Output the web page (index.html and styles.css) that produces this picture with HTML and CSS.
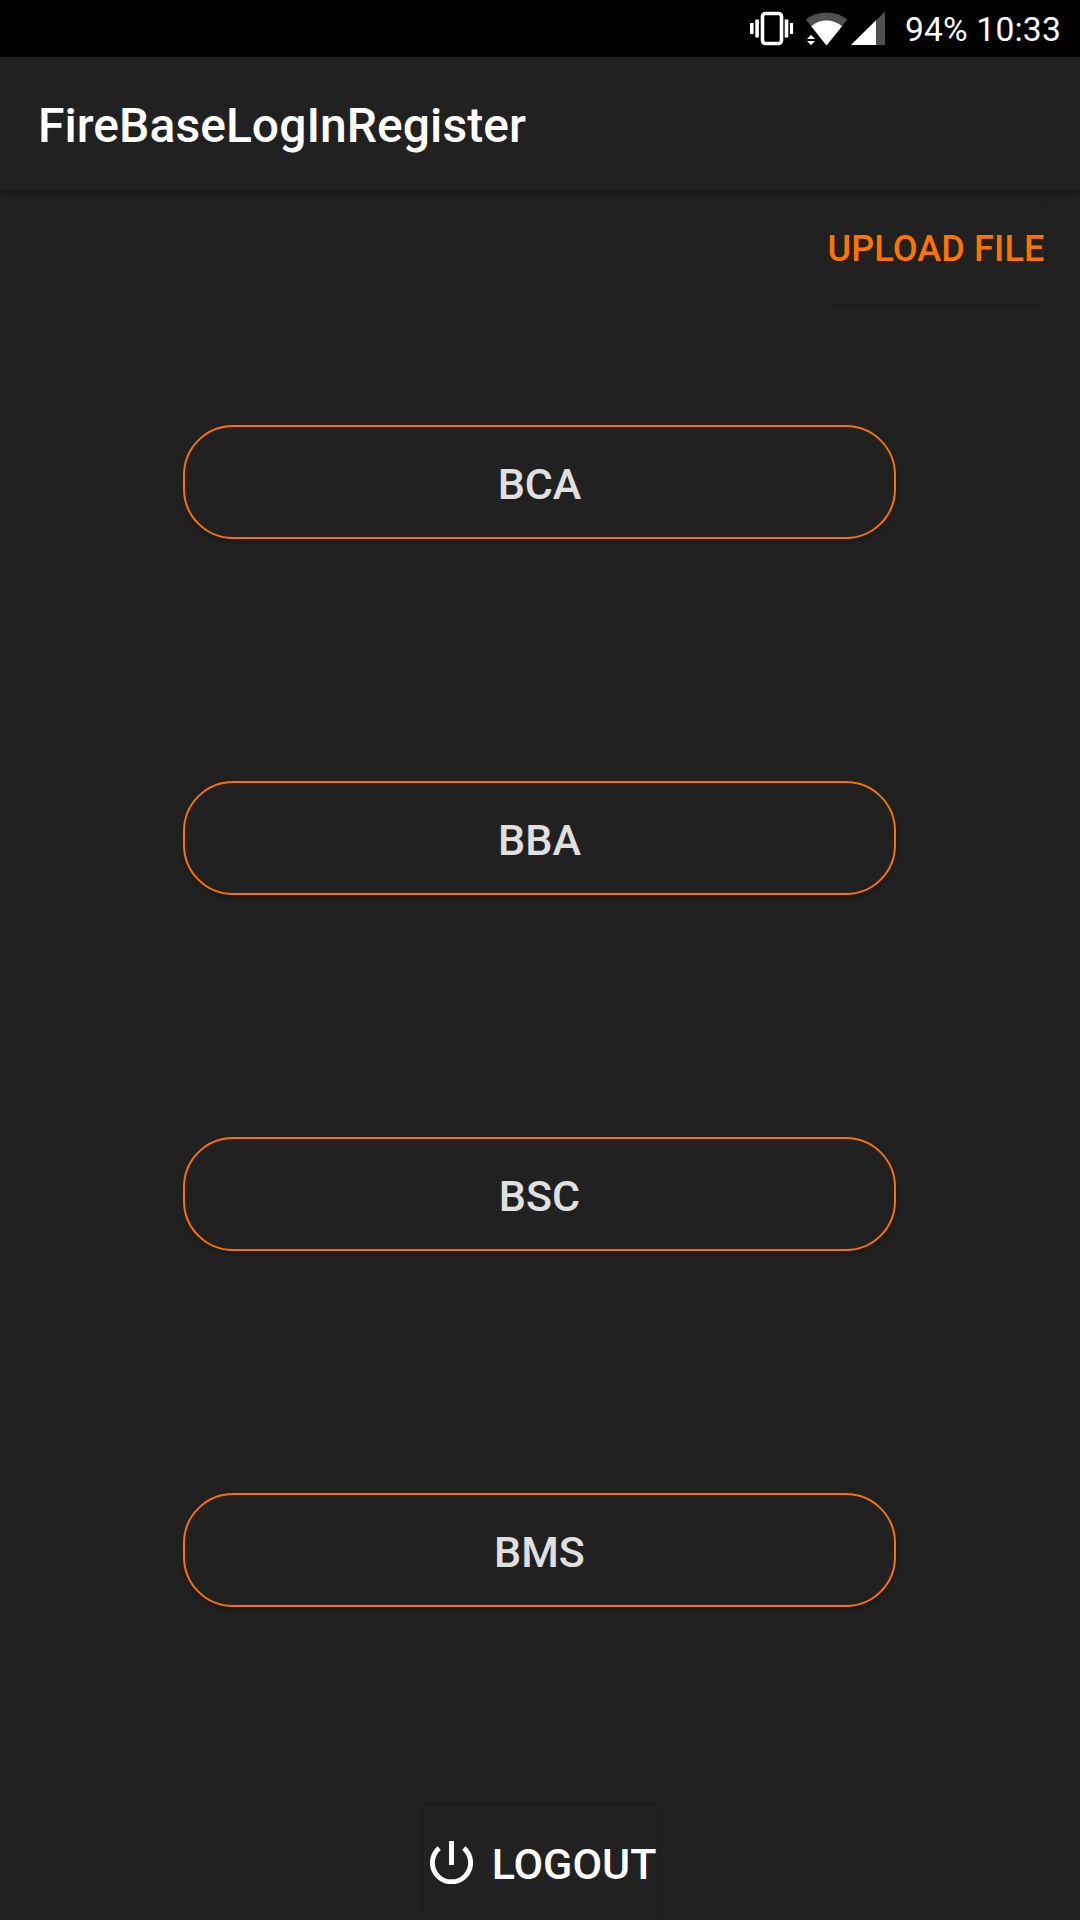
FILE: index.html
```html
<!DOCTYPE html>
<html lang="en">
<head>
<meta charset="utf-8">
<title>FireBaseLogInRegister</title>
<link rel="stylesheet" href="styles.css">
</head>
<body>
<div class="screen">
  <div class="status-bar">
    <svg class="status-icons" viewBox="0 0 140 57" aria-hidden="true">
      <rect x="12.5" y="13.5" width="19" height="30" rx="3" fill="none" stroke="#fff" stroke-width="3.6"/>
      <path fill="#fff" d="M0 23h3.6v11H0zM5.3 19.5h3.6v18H5.3zM34.7 19.5h3.6v18h-3.6zM39.9 23h3.2v11h-3.2z"/>
      <path fill="#505050" d="M55.7 19.6Q64.5 12.4 76.5 12.4T97.3 19.6L76.5 45.5z"/>
      <path fill="#fff" d="M61.3 26.3Q67.5 20.4 76.5 20.4T92 26.3L76.5 45.5z"/>
      <path fill="#fff" d="M57 39h8l-4-4.3zM57 41h8l-4 4.3z"/>
      <path fill="#505050" d="M135 11.5V45h-34z"/>
      <path fill="#fff" d="M126 20.3V45h-25z"/>
    </svg>
    <span class="status-text">94% 10:33</span>
  </div>
  <header class="app-bar"><h1 class="app-title">FireBaseLogInRegister</h1></header>
  <div class="toolbar"><button class="flat-button upload">UPLOAD FILE</button></div>
  <main class="courses">
    <button class="course">BCA</button>
    <button class="course">BBA</button>
    <button class="course">BSC</button>
    <button class="course">BMS</button>
  </main>
  <footer class="footer">
    <button class="flat-button logout">
      <svg class="power" viewBox="0 0 43 43" fill="none" stroke="#fff" stroke-width="4.9" aria-hidden="true">
        <path d="M21.5 0v24M9.2 7.1A19.1 19.1 0 1 0 33.8 7.1"/>
      </svg>
      <span>LOGOUT</span>
    </button>
  </footer>
</div>
</body>
</html>
```
FILE: styles.css
```css
* { box-sizing: border-box; }
body { margin: 0; background: #212121; font-family: Roboto, sans-serif; }
button { margin: 0; border: 0; font-family: inherit; font-weight: 500; background: #212121; }
.screen {
  display: flex;
  flex-direction: column;
  width: 1080px;
  height: 1920px;
  overflow: hidden;
  background: #212121;
}
.status-bar {
  display: flex;
  justify-content: flex-end;
  align-items: center;
  height: 57px;
  padding-right: 19px;
  background: #000;
  color: #fff;
}
.status-icons { width: 140px; height: 57px; margin-right: 15px; }
.status-text { padding-top: 3px; font-size: 33.6px; line-height: 40px; letter-spacing: .2px; white-space: nowrap; }
.app-bar {
  display: flex;
  align-items: center;
  height: 133px;
  padding: 4px 38px 0 38px;
  background: #212121;
  box-shadow: 0 3px 9px rgba(0, 0, 0, .3);
  z-index: 1;
}
.app-title { margin: 0; color: #fff; font-size: 48px; font-weight: 500; line-height: 56px; letter-spacing: .05px; }
.toolbar { display: flex; justify-content: flex-end; height: 114px; padding-right: 35px; }
.flat-button {
  display: flex;
  align-items: center;
  justify-content: center;
  height: 114px;
  padding: 3px 0 0;
  white-space: nowrap;
  box-shadow: 0 0 4px rgba(0, 0, 0, .2);
}
.upload { width: 219px; padding-left: 1px; color: #ff7300; font-size: 36px; letter-spacing: .15px; }
.courses {
  display: flex;
  flex-direction: column;
  align-items: center;
  gap: 242px;
  padding: 121px 1px 0 0;
}
.course {
  width: 713px;
  height: 114px;
  padding: 3px 0 0;
  border: 2px solid #f77208;
  border-radius: 50px;
  color: #e0e0e0;
  font-size: 43px;
  box-shadow: 0 3px 6px rgba(0, 0, 0, .25);
}
.footer { display: flex; justify-content: center; margin-top: auto; }
.logout { gap: 19px; width: 233px; padding: 2px 0 0 6px; color: #fff; font-size: 43px; }
.power { flex: none; width: 43px; height: 43px; margin-top: -3px; }
```
